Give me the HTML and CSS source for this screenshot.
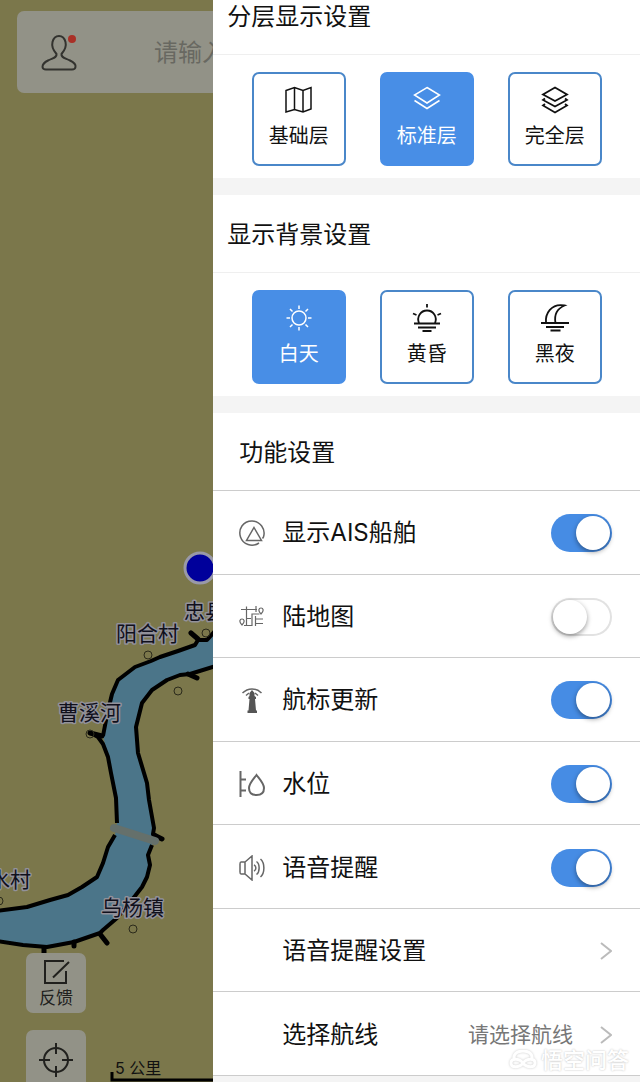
FILE: index.html
```html
<!DOCTYPE html>
<html lang="zh-CN">
<head>
<meta charset="utf-8">
<meta name="viewport" content="width=device-width, initial-scale=1">
<title>显示设置</title>
<link rel="stylesheet" href="styles.css">
</head>
<body>
<div class="app">
  <main class="map">
    <svg class="map-canvas" width="640" height="1082" aria-label="地图">
      <path class="water" d="M214 633L207 640L198 640L195 645L178 651L160 657L151 661L135 667L118 680L112 694L107 715L103 736L108 757L111 773L116 798L117 823L115 835L108 847L103 863L97 877L82 887L68 895L50 900L27 907L-4 911V941L23 945L47 947L74 942L100 933L103 930L117 918L135 896L142 887L147 877L150 865L148 855L152 847L153 833L154 828L149 800L147 783L138 753L136 727L142 703L152 690L167 680L180 675L190 674L214 667Z"/>
      <g class="bank">
        <path d="M216 630L207 640L198 640L195 645L178 651L160 657L151 661L135 667L118 680L112 694L107 715L103 736"/>
        <path d="M91 733L98 737L103 744L108 757L111 773L116 798L117 823M115 835L108 847L103 863L97 877L82 887L68 895L50 900L27 907L-4 911"/>
        <path d="M216 666L190 674L180 675L167 680L152 690L142 703L136 727L138 753L147 783L149 800L154 828L153 834L159 838M152 845L148 855L150 865L147 877L142 887L135 896L117 918L103 930L100 933L74 942L47 947L23 945L-4 941"/>
      </g>
      <path class="spur" d="M191 633L198 639M188 674L197 678M90 733L102 736M154 835L162 839M100 934L107 943M74 942V946M44 948V953"/>
      <path class="bridge" d="M114 828L155 841"/>
      <g class="place">
        <circle cx="148" cy="655" r="4"/><circle cx="178" cy="691" r="4"/><circle cx="206" cy="633" r="4"/>
        <circle cx="90" cy="734" r="4"/><circle cx="133" cy="929" r="4"/><circle cx="-1" cy="901" r="4"/>
      </g>
      <circle class="position" cx="200" cy="568" r="15"/>
      <g class="place-name">
        <text x="184" y="619">忠县</text>
        <text x="116" y="641">阳合村</text>
        <text x="58" y="720">曹溪河</text>
        <text x="-32" y="887">水水村</text>
        <text x="101" y="915">乌杨镇</text>
      </g>
      <path class="scale" d="M112 1072V1080H640"/>
      <text class="scale-name" x="115" y="1074">5 公里</text>
    </svg>
    <div class="overlay">
      <div class="search">
        <button class="account" aria-label="账户">
          <svg width="36" height="40" viewBox="0 0 36 40"><path d="M14.500 22C11 18 9.500 14 10.500 10C11.500 6 14 4 17 4C20 4 22.500 6 23.500 10C24.500 14 23 18 19.500 22C19 26 23 26 28 28.500C32 30.500 34 32.500 33.500 35C33.300 37 32 37.500 30 37.500H4C2 37.500 .700 37 .500 35C.500 32.500 2 30.500 6 28.500C11 26 15 26 14.500 22Z"/><circle cx="30" cy="7" r="4"/></svg>
        </button>
        <input class="query" type="text" placeholder="请输入" aria-label="搜索">
      </div>
      <div class="tools">
        <button class="tool">
          <svg width="28" height="26" viewBox="0 0 28 26"><path d="M22 2H3V24H24V12M11 18.500L27 3"/></svg>
          <span>反馈</span>
        </button>
        <button class="tool" aria-label="定位">
          <svg width="34" height="34" viewBox="0 0 34 34"><circle cx="17" cy="17" r="12"/><path d="M17 0V11M17 23V34M0 17H11M23 17H34"/></svg>
        </button>
      </div>
    </div>
  </main>

  <aside class="panel">
    <section class="group">
      <h2 class="title">分层显示设置</h2>
      <div class="cards">
        <button class="card" aria-pressed="false">
          <svg class="card-icon" viewBox="0 0 28 28"><path d="M1 4.500L9.500 1.500L18 4.500L26 1.500V23L18 26L9.500 23.500L1 26ZM9.500 1.500V23.500M18 4.500V26"/></svg>
          <span>基础层</span>
        </button>
        <button class="card" aria-pressed="true">
          <svg class="card-icon" viewBox="0 0 28 28"><path d="M14 1.500L26.500 9L14 17L1.500 9ZM1.500 14.500L14 22.500L26.500 14.500"/></svg>
          <span>标准层</span>
        </button>
        <button class="card" aria-pressed="false">
          <svg class="card-icon bold" viewBox="0 0 28 28"><path d="M14 1.500L26 8.500L14 15L2 8.500ZM4 12.500L2 14L14 20.500L26 14L24 12.500M4 18L2 19.500L14 26.500L26 19.500L24 18"/></svg>
          <span>完全层</span>
        </button>
      </div>
    </section>

    <section class="group">
      <h2 class="title">显示背景设置</h2>
      <div class="cards">
        <button class="card" aria-pressed="true">
          <svg class="card-icon" viewBox="0 0 28 28"><circle cx="14" cy="14" r="7"/><path d="M14 1.500V5M14 23V26.500M1.500 14H5M23 14H26.500M5 5L7.500 7.500M20.500 20.500L23 23M23 5L20.500 7.500M5 23L7.500 20.500"/></svg>
          <span>白天</span>
        </button>
        <button class="card" aria-pressed="false">
          <svg class="card-icon bold" viewBox="0 0 28 28"><path d="M6 19C3.500 13 7.500 6.500 14 6.500S24.500 13 22 19M1 19.500H27M5 23.500H23M9.500 27H18.500M14 0V3.500M0 9.500L3.500 11M28 9.500L24.500 11"/></svg>
          <span>黄昏</span>
        </button>
        <button class="card" aria-pressed="false">
          <svg class="card-icon bold" viewBox="0 0 28 28"><path d="M5 19C4 10 10 -1 23.500 1.500C15.500 5 13 11 14.500 19M0 19H28M5 23H23M9.500 26.500H19.500"/></svg>
          <span>黑夜</span>
        </button>
      </div>
    </section>

    <section class="features">
      <h2 class="title feature-title">功能设置</h2>
      <ul class="rows">
        <li class="row">
          <svg class="row-icon" viewBox="0 0 26 26"><path d="M20 23C13 27.500 4 24.500 1.500 17C-1 9 4 1 13 1C21 1 27 9 24.500 17L23.500 18.500M15 7.500L22.500 20.500H7.500Z"/></svg>
          <label class="name" for="ais">显示AIS船舶</label>
          <input class="switch" id="ais" type="checkbox" checked>
        </li>
        <li class="row">
          <svg class="row-icon fine" viewBox="0 0 26 26"><path d="M2 5.500H18M7.500 2.500V21M17 2V8M7.500 14.500H12M5 21.500H13V10H20.500M16.500 12V22M16.500 15H24M16.500 19.500H24"/><path d="M22 10C18.500 6.500 20 4 22 4S25.500 6.500 22 10ZM3 21C-.500 17.500 1 15 3 15S6.500 17.500 3 21Z"/></svg>
          <label class="name" for="land">陆地图</label>
          <input class="switch" id="land" type="checkbox">
        </li>
        <li class="row">
          <svg class="row-icon" viewBox="0 0 26 26"><path d="M3.500 6C9 .500 17 .500 22.500 6M7 8.500L10 6M19 8.500L16 6"/><path class="solid" d="M13 3L15.500 6V9L17 10V12H16L17 23.500H18V26H8.500V23.500H9.500L10.500 12H9.500V10L10.500 9V6Z"/></svg>
          <label class="name" for="beacon">航标更新</label>
          <input class="switch" id="beacon" type="checkbox" checked>
        </li>
        <li class="row">
          <svg class="row-icon thick" viewBox="0 0 26 26"><path d="M1.500 0V26M1.500 8.500H7M1.500 19.500H7M17.500 4C14.500 8 10 12.500 10 17C10 21.500 13 24 17.500 24S25 21.500 25 17C25 12.500 20.500 8 17.500 4Z"/></svg>
          <label class="name" for="water">水位</label>
          <input class="switch" id="water" type="checkbox" checked>
        </li>
        <li class="row">
          <svg class="row-icon" viewBox="0 0 26 26"><path d="M6 7H2C1 7 1 8 1 9V17C1 18 1 19 2 19H6L13 25V1L6 7V19M15 10C17.500 11 17.500 15 15 16M17.500 6.500C21 9 21 17 17.500 19.500M21.500 4C26 8 26 18 21.500 22"/></svg>
          <label class="name" for="voice">语音提醒</label>
          <input class="switch" id="voice" type="checkbox" checked>
        </li>
        <li class="row">
          <a class="link" href="#voice-settings">
            <span class="name">语音提醒设置</span>
            <svg class="chevron" viewBox="0 0 12 18"><path d="M1 1L11 9L1 17"/></svg>
          </a>
        </li>
        <li class="row">
          <a class="link" href="#route">
            <span class="name">选择航线</span>
            <span class="value">请选择航线</span>
            <svg class="chevron" viewBox="0 0 12 18"><path d="M1 1L11 9L1 17"/></svg>
          </a>
        </li>
      </ul>
    </section>
  </aside>

  <div class="watermark">
    <svg width="28" height="20" viewBox="0 0 28 20"><path d="M5 10C4 3 9 1 14 1S24 3 23 10M14 13C10 8 2 8 2 13S10 18 14 13C18 8 26 8 26 13S18 18 14 13Z"/></svg>
    <span>悟空问答</span>
  </div>
</div>
</body>
</html>
```
FILE: styles.css
```css
* { box-sizing: border-box; }

body {
  margin: 0;
  color: #111;
  font-family: Inter, "Noto Sans CJK SC", sans-serif;
  font-size: 24px;
  line-height: 32px;
}

button, input { font: inherit; color: inherit; }

button {
  padding: 0;
  border: 0;
  cursor: pointer;
}

svg {
  display: block;
  flex: none;
  fill: none;
  stroke: currentColor;
}

.app {
  position: relative;
  display: grid;
  grid-template-columns: 1fr 2fr;
  min-height: 100vh;
  overflow: hidden;
}

/* Map */
.map {
  position: relative;
  overflow: hidden;
  background: #7b774b;
}

.map-canvas {
  position: absolute;
  top: 0;
  left: 0;
}

.water { fill: #4b7589; stroke: none; }

.bank {
  stroke: #000;
  stroke-width: 4;
  stroke-linejoin: round;
}

.spur {
  stroke: #000;
  stroke-width: 5;
  stroke-linecap: round;
}

.bridge {
  stroke: #65706b;
  stroke-width: 8;
  stroke-linecap: round;
}

.place { stroke: #2b2a1b; }

.position {
  fill: #00009b;
  stroke: #9999a8;
  stroke-width: 3;
}

.place-name {
  fill: #10101c;
  stroke: #92919a;
  stroke-width: 3;
  stroke-linejoin: round;
  paint-order: stroke;
  font-size: 21px;
}

.scale { stroke: #000; stroke-width: 3; }

.scale-name {
  fill: #111;
  stroke: none;
  font-size: 16px;
}

.overlay {
  position: absolute;
  inset: 0;
  display: flex;
  flex-direction: column;
  justify-content: space-between;
  padding: 11px 0 0 17px;
}

.search {
  display: flex;
  align-items: center;
  gap: 76px;
  width: 606px;
  height: 82px;
  padding-left: 25px;
  border-radius: 7px;
  background: #929287;
}

.account {
  background: none;
  color: #33332f;
}

.account svg { overflow: visible; }

.account path { stroke-width: 2; }

.account circle { fill: #a93027; stroke: none; }

.query {
  flex: 1;
  min-width: 0;
  padding: 2px 0 0;
  border: 0;
  background: none;
}

.query::placeholder { color: #686861; opacity: 1; }

.tools {
  display: flex;
  flex-direction: column;
  gap: 17px;
  margin: 0 0 -8px 9px;
}

.tool {
  display: flex;
  flex-direction: column;
  align-items: center;
  justify-content: center;
  gap: 3px;
  width: 60px;
  height: 60px;
  border-radius: 7px;
  background: #929287;
  color: #20201d;
  font-size: 17px;
  line-height: 20px;
  stroke-width: 2;
}

/* Settings panel */
.panel {
  display: flex;
  flex-direction: column;
  margin-top: -23px;
  padding-bottom: 6px;
  background: #f4f4f4;
}

.group {
  margin-bottom: 17px;
  background: #fff;
}

.title {
  height: 78px;
  margin: 0;
  padding: 24px 14px 0;
  border-bottom: 1px solid #efefef;
  font-size: 24px;
  font-weight: 400;
}

.cards {
  display: flex;
  justify-content: center;
  gap: 34px;
  padding: 17px 0 12px;
}

.card {
  display: flex;
  flex-direction: column;
  align-items: center;
  gap: 8px;
  width: 94px;
  height: 94px;
  padding-top: 12px;
  border: 2px solid #4a87c9;
  border-radius: 7px;
  background: #fff;
  font-size: 20px;
  line-height: 28px;
}

.card[aria-pressed="true"] {
  border-color: #488ee6;
  background: #488ee6;
  color: #fff;
}

.card-icon {
  width: 28px;
  height: 28px;
  overflow: visible;
  stroke-width: 1.5;
}

.bold { stroke-width: 1.8; }

.features {
  display: flex;
  flex: 1;
  flex-direction: column;
  background: #fff;
}

.feature-title {
  padding-left: 26px;
  border-color: #ccc;
}

.rows {
  display: flex;
  flex: 1;
  flex-direction: column;
  margin: 0;
  padding: 0;
  list-style: none;
}

.row {
  display: flex;
  flex: 1;
  align-items: center;
  gap: 17px;
  min-height: 83px;
  padding: 2px 28px 0 26px;
  border-bottom: 1px solid #ccc;
}

.row-icon {
  width: 26px;
  height: 26px;
  color: #666;
  stroke-width: 1.5;
}

.fine { stroke-width: 1.2; }

.thick { stroke-width: 2; }

.solid { fill: #555; stroke: none; }

.name { flex: 1; }

.link {
  display: flex;
  flex: 1;
  align-items: center;
  gap: 27px;
  padding-left: 43px;
  color: inherit;
  text-decoration: none;
}

.value {
  color: #777;
  font-size: 21px;
}

.chevron {
  width: 12px;
  height: 18px;
  color: #bbb;
  stroke-width: 2;
}

.switch {
  flex: none;
  width: 61px;
  height: 38px;
  margin: 0;
  padding: 2px;
  appearance: none;
  border-radius: 19px;
  background: #fff;
  box-shadow: inset 0 0 0 2px #e2e2e2;
  cursor: pointer;
}

.switch::before {
  display: block;
  width: 34px;
  height: 34px;
  border-radius: 50%;
  background: #fff;
  box-shadow: 0 2px 5px rgb(0 0 0 / 40%);
  content: "";
}

.switch:checked {
  background: #468ce4;
  box-shadow: none;
}

.switch:checked::before { margin-left: auto; }

.watermark {
  position: absolute;
  right: 11px;
  bottom: 8px;
  display: flex;
  align-items: center;
  gap: 4px;
  color: #fff;
  font-size: 22px;
  font-weight: 500;
  line-height: 28px;
  text-shadow: 0 0 2px #bbb;
  pointer-events: none;
}

.watermark svg {
  filter: drop-shadow(0 0 1px #ccc);
  stroke-width: 3;
}
```
